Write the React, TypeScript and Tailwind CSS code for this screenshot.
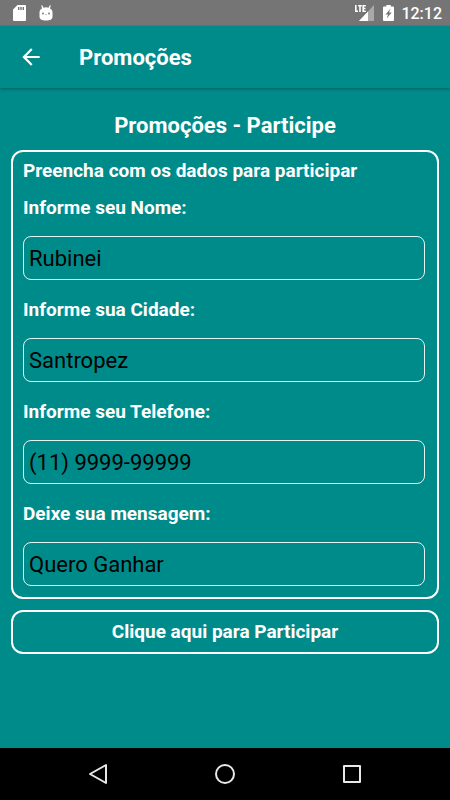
import React from 'react';

const fields = [
  { id: 'nome', label: 'Informe seu Nome:', type: 'text', value: 'Rubinei' },
  { id: 'cidade', label: 'Informe sua Cidade:', type: 'text', value: 'Santropez' },
  { id: 'telefone', label: 'Informe seu Telefone:', type: 'tel', value: '(11) 9999-99999' },
  { id: 'mensagem', label: 'Deixe sua mensagem:', type: 'text', value: 'Quero Ganhar' },
];

const StatusBar = () => (
  <div className="flex h-[26px] items-center justify-between bg-[#757575] pl-[13px] pr-2 text-white">
    <div className="flex items-center gap-[13px]">
      <svg width="13" height="16" viewBox="0 0 13 16" aria-hidden="true">
        <path
          fill="currentColor"
          fillRule="evenodd"
          d="M4.500 0H12a1 1 0 0 1 1 1v14a1 1 0 0 1-1 1H1a1 1 0 0 1-1-1V4.500zM5 2v3h1.400V2zm2.300 0v3h1.400V2zm2.300 0v3H11V2z"
        />
      </svg>
      <svg width="14" height="16" viewBox="0 0 14 16" aria-hidden="true">
        <path
          fill="currentColor"
          d="M3.100 0l1.300 2.800a8 8 0 0 1 5.200 0L10.900 0l.8.400-.7 3.100c1.700.8 2.500 2 2.500 4V11.500c0 3-2.600 4-6.500 4S.5 14.500.5 11.500V7.500c0-2 .8-3.200 2.500-4L2.300.4z"
        />
        <circle cx="4" cy="8.500" r=".9" fill="#757575" />
        <circle cx="10" cy="8.500" r=".9" fill="#757575" />
        <path d="M6 9.500h2" stroke="#b5b5b5" strokeWidth=".7" />
      </svg>
    </div>
    <div className="flex items-center">
      <svg width="19" height="16" viewBox="0 0 19 16" aria-hidden="true">
        <path fill="#a9a9a9" d="M19 0v16H4z" />
        <path fill="currentColor" d="M13 6.400V16H4z" />
        <path fill="#757575" d="M0 0h12v8H0z" />
        <path
          fill="none"
          stroke="currentColor"
          strokeWidth="1.600"
          d="M.8 0v6.200H3M3.200.8h3.600M5 .8V7M10.800.8H8.200v5.400h2.600M8.200 3.500h2.300"
        />
      </svg>
      <svg className="ml-[9px]" width="11" height="16" viewBox="0 0 11 16" aria-hidden="true">
        <path
          fill="currentColor"
          fillRule="evenodd"
          d="M3.300 0h4.400v1.600H10a1 1 0 0 1 1 1V15a1 1 0 0 1-1 1H1a1 1 0 0 1-1-1V2.600a1 1 0 0 1 1-1h2.300zM7.500 3.500L2.500 9.500h2.600L3.700 13.500l5-6H6z"
        />
      </svg>
      <span className="ml-[7px] pt-0.5 text-base font-medium leading-5">12:12</span>
    </div>
  </div>
);

const Header = () => (
  <header className="z-10 flex h-[62px] items-center bg-[#008b8b] shadow-[0_1px_3px_rgba(0,0,0,0.35)]">
    <button type="button" aria-label="Voltar" className="ml-[18px] flex h-[26px] w-[26px] items-center justify-center">
      <svg width="26" height="26" viewBox="0 0 24 24" aria-hidden="true">
        <path fill="currentColor" d="M20 11H7.830l5.590-5.590L12 4l-8 8 8 8 1.410-1.410L7.830 13H20z" />
      </svg>
    </button>
    <h1 className="ml-[35px] pt-0.5 text-[22px] font-bold leading-7">Promoções</h1>
  </header>
);

const NavBar = () => (
  <nav className="flex h-[52px] items-center justify-around bg-black px-[35px] text-[#e8e8e8]">
    <button type="button" aria-label="Voltar à tela anterior" className="p-2">
      <svg width="22" height="22" viewBox="0 0 22 22" fill="none" stroke="currentColor" strokeWidth="2" strokeLinejoin="round" aria-hidden="true">
        <path d="M19 2v18L3 11z" />
      </svg>
    </button>
    <button type="button" aria-label="Início" className="p-2">
      <svg width="22" height="22" viewBox="0 0 22 22" fill="none" stroke="currentColor" strokeWidth="2" aria-hidden="true">
        <circle cx="11" cy="11" r="9" />
      </svg>
    </button>
    <button type="button" aria-label="Aplicativos recentes" className="p-2">
      <svg width="22" height="22" viewBox="0 0 22 22" fill="none" stroke="currentColor" strokeWidth="2" strokeLinejoin="round" aria-hidden="true">
        <path d="M3 3h16v16H3z" />
      </svg>
    </button>
  </nav>
);

const App = () => {
  const [values, setValues] = React.useState<Record<string, string>>(
    Object.fromEntries(fields.map((field) => [field.id, field.value]))
  );

  return (
    <div className="flex min-h-screen flex-col bg-[#008b8b] font-[Roboto,sans-serif] text-white">
      <StatusBar />
      <Header />
      <main className="flex-1 px-[11px] pt-6">
        <h2 className="text-center text-[22px] font-bold leading-7">Promoções - Participe</h2>
        <form onSubmit={(e) => e.preventDefault()} className="mt-[10px]">
          <div className="rounded-xl border-2 border-white pb-[11px] pl-[10px] pr-3 pt-2">
            <p className="mb-[15px] text-[19px] font-bold leading-[22px]">Preencha com os dados para participar</p>
            <div className="flex flex-col gap-[19px]">
              {fields.map((field) => (
                <div key={field.id}>
                  <label htmlFor={field.id} className="mb-[17px] block text-[19px] font-bold leading-[22px]">
                    {field.label}
                  </label>
                  <input
                    id={field.id}
                    type={field.type}
                    value={values[field.id]}
                    onChange={(e) => setValues({ ...values, [field.id]: e.target.value })}
                    className="block h-11 w-full rounded-lg border border-white/90 bg-transparent px-[5px] text-[22px] text-black outline-none"
                  />
                </div>
              ))}
            </div>
          </div>
          <button
            type="submit"
            className="mt-[11px] block h-11 w-full rounded-xl border-2 border-white text-[19px] font-bold leading-[22px]"
          >
            Clique aqui para Participar
          </button>
        </form>
      </main>
      <NavBar />
    </div>
  );
};

export default App;
